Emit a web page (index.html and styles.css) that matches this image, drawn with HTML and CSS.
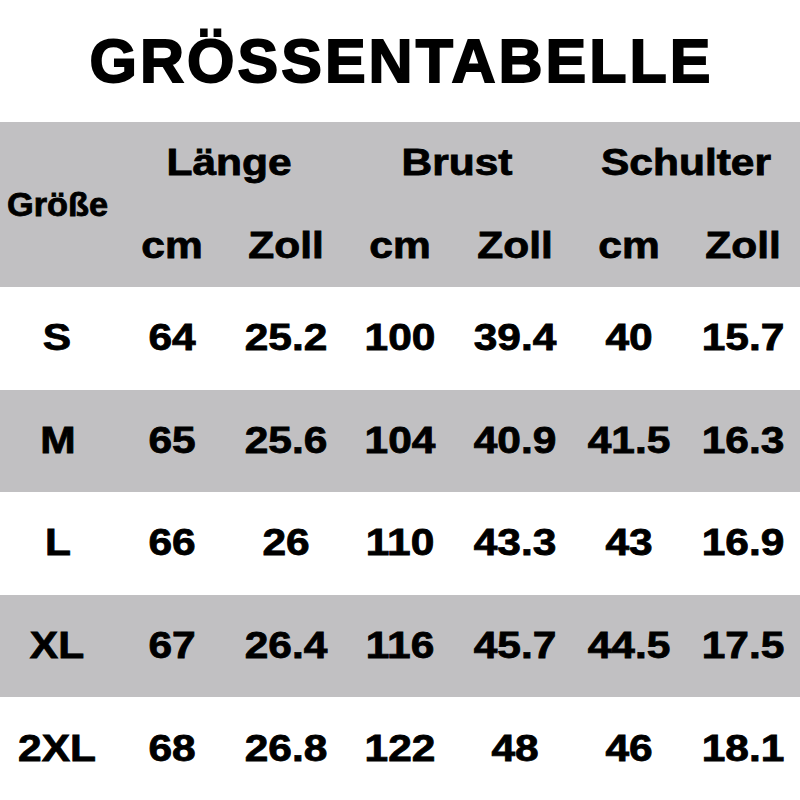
FILE: index.html
```html
<!DOCTYPE html>
<html lang="de">
<head>
<meta charset="utf-8">
<title>Größentabelle</title>
<link rel="stylesheet" href="styles.css">
</head>
<body>
<div class="page">
  <h1 class="title">GRÖSSENTABELLE</h1>
  <div class="head">
    <div class="cell size-head"><span class="t t-narrow">Größe</span></div>
    <div class="cell group"><span class="t">Länge</span></div>
    <div class="cell group"><span class="t">Brust</span></div>
    <div class="cell group"><span class="t">Schulter</span></div>
    <div class="cell"><span class="t">cm</span></div>
    <div class="cell"><span class="t">Zoll</span></div>
    <div class="cell"><span class="t">cm</span></div>
    <div class="cell"><span class="t">Zoll</span></div>
    <div class="cell"><span class="t">cm</span></div>
    <div class="cell"><span class="t">Zoll</span></div>
  </div>
  <div class="row">
    <div class="cell"><span class="t">S</span></div>
    <div class="cell"><span class="t">64</span></div>
    <div class="cell"><span class="t">25.2</span></div>
    <div class="cell"><span class="t">100</span></div>
    <div class="cell"><span class="t">39.4</span></div>
    <div class="cell"><span class="t">40</span></div>
    <div class="cell"><span class="t">15.7</span></div>
  </div>
  <div class="row gray">
    <div class="cell"><span class="t">M</span></div>
    <div class="cell"><span class="t">65</span></div>
    <div class="cell"><span class="t">25.6</span></div>
    <div class="cell"><span class="t">104</span></div>
    <div class="cell"><span class="t">40.9</span></div>
    <div class="cell"><span class="t">41.5</span></div>
    <div class="cell"><span class="t">16.3</span></div>
  </div>
  <div class="row">
    <div class="cell"><span class="t">L</span></div>
    <div class="cell"><span class="t">66</span></div>
    <div class="cell"><span class="t">26</span></div>
    <div class="cell"><span class="t">110</span></div>
    <div class="cell"><span class="t">43.3</span></div>
    <div class="cell"><span class="t">43</span></div>
    <div class="cell"><span class="t">16.9</span></div>
  </div>
  <div class="row gray">
    <div class="cell"><span class="t">XL</span></div>
    <div class="cell"><span class="t">67</span></div>
    <div class="cell"><span class="t">26.4</span></div>
    <div class="cell"><span class="t">116</span></div>
    <div class="cell"><span class="t">45.7</span></div>
    <div class="cell"><span class="t">44.5</span></div>
    <div class="cell"><span class="t">17.5</span></div>
  </div>
  <div class="row">
    <div class="cell"><span class="t">2XL</span></div>
    <div class="cell"><span class="t">68</span></div>
    <div class="cell"><span class="t">26.8</span></div>
    <div class="cell"><span class="t">122</span></div>
    <div class="cell"><span class="t">48</span></div>
    <div class="cell"><span class="t">46</span></div>
    <div class="cell"><span class="t">18.1</span></div>
  </div>
</div>
</body>
</html>
```

FILE: styles.css
```css
html, body {
  margin: 0;
  padding: 0;
  background: #ffffff;
}

.page {
  width: 800px;
  height: 800px;
  overflow: hidden;
  font-family: "Liberation Sans", Arial, sans-serif;
  font-weight: bold;
  color: #000000;
}

.title {
  margin: 0;
  height: 122px;
  line-height: 122px;
  text-align: center;
  font-size: 61px;
  font-weight: bold;
  letter-spacing: 3px;
  padding-left: 3px;
  -webkit-text-stroke: 1.8px #000000;
}

.head {
  display: grid;
  grid-template-columns: 115px repeat(6, 1fr);
  grid-template-rows: 82px 83px;
  background: #c1c0c2;
}

.size-head {
  grid-row: span 2;
}

.group {
  grid-column: span 2;
}

.row {
  display: grid;
  grid-template-columns: 115px repeat(6, 1fr);
  height: 102.6px;
}

.gray {
  background: #c1c0c2;
}

.cell {
  display: flex;
  align-items: center;
  justify-content: center;
  font-size: 36px;
  white-space: nowrap;
  -webkit-text-stroke: 0.8px #000000;
}

.size-head.cell {
  font-size: 33px;
}

.t {
  display: inline-block;
  transform: scaleX(1.18);
}

.t-narrow {
  transform: scaleX(1.04);
}
```
